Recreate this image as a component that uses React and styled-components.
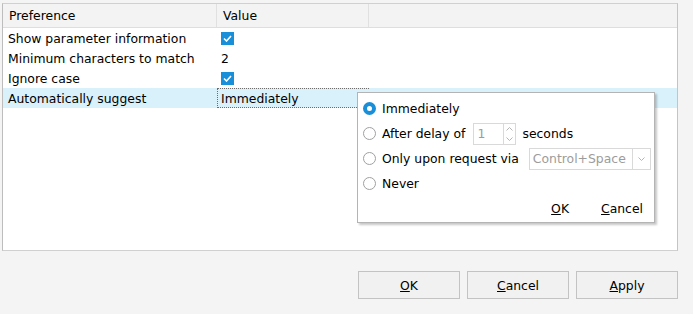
import React from 'react';
import styled, { createGlobalStyle } from 'styled-components';

const Global = createGlobalStyle`
  html, body { margin: 0; padding: 0; background: #f4f4f4; }
  body { font-family: "DejaVu Sans", Verdana, sans-serif; font-size: 12.4px; color: #000; }
`;

const Window = styled.div`
  width: 693px;
  height: 314px;
  display: flex;
  flex-direction: column;
  background: #f4f4f4;
  box-sizing: border-box;
  padding: 3px 15px 0 2px;
`;

const Table = styled.div`
  position: relative;
  height: 248px;
  background: #fff;
  border: 1px solid #d0d0d0;
  border-left-color: #bdbdbd;
  border-right-color: #c4c4c4;
  box-sizing: border-box;
`;

const Header = styled.div`
  display: grid;
  grid-template-columns: 214px 152px 1fr;
  height: 23px;
  background: #f3f3f3;
  border-bottom: 1px solid #dedede;
`;

const HeadCell = styled.div`
  display: flex;
  align-items: center;
  padding-left: 6px;
  border-right: 1px solid #e0e0e0;
  &:last-child { border-right: none; }
`;

const Row = styled.div`
  display: grid;
  grid-template-columns: 214px 152px 1fr;
  height: 20px;
  background: ${p => (p.$selected ? '#d9f1fb' : '#fff')};
`;

const Cell = styled.div`
  display: flex;
  align-items: center;
  white-space: nowrap;
  padding-left: ${p => (p.$value ? '4px' : '5px')};
`;

const Editor = styled.div`
  display: flex;
  align-items: center;
  padding-left: 3px;
  border: 1px dotted #6d6d6d;
  border-right: none;
  box-sizing: border-box;
`;

const Check = styled.span`
  width: 13px;
  height: 13px;
  background: #1a8fd9;
  display: inline-flex;
  align-items: center;
  justify-content: center;
`;

const Popup = styled.div`
  position: absolute;
  left: 354px;
  top: 88px;
  width: 298px;
  height: 131px;
  background: #fff;
  border: 1px solid #b4b4b4;
  box-shadow: 2px 2px 2px rgba(0, 0, 0, 0.22);
  box-sizing: border-box;
  padding: 3px 10px 0 4px;
  display: flex;
  flex-direction: column;
  white-space: nowrap;
`;

const Option = styled.div`
  display: flex;
  align-items: center;
  height: 25px;
  gap: 6px;
`;

const Radio = styled.span`
  width: 13px;
  height: 13px;
  border-radius: 50%;
  box-sizing: border-box;
  flex: none;
  border: ${p => (p.$on ? '4px solid #1a8fd9' : '1px solid #a0a0a0')};
  background: #fff;
  margin-left: 1px;
`;

const Field = styled.span`
  display: inline-flex;
  align-items: stretch;
  height: 22px;
  border: 1px solid #d9d9d9;
  box-sizing: border-box;
  color: #9c9c9c;
  margin-left: ${p => p.$shift || 0}px;
`;

const FieldText = styled.span`
  display: flex;
  align-items: center;
  padding: 0 3px;
  width: ${p => p.$w}px;
  box-sizing: border-box;
`;

const Spin = styled.span`
  width: 11px;
  display: flex;
  flex-direction: column;
  justify-content: center;
  border-left: 1px solid #d9d9d9;
`;

const SpinPart = styled.span`
  flex: 1;
  display: flex;
  align-items: center;
  justify-content: center;
`;

const DropArrow = styled.span`
  width: 17px;
  border-left: 1px solid #d9d9d9;
  display: flex;
  align-items: center;
  justify-content: center;
`;

const PopupActions = styled.div`
  display: flex;
  justify-content: flex-end;
  gap: 32px;
  margin-top: 5px;
  padding-right: 1px;
`;

const Link = styled.span`
  & u { text-decoration: underline; }
`;

const Footer = styled.div`
  display: flex;
  justify-content: flex-end;
  gap: 7px;
  margin-top: 20px;
`;

const Button = styled.button`
  width: 102px;
  height: 28px;
  background: #f1f1f1;
  border: 1px solid #c3c3c3;
  font-family: "DejaVu Sans", Verdana, sans-serif;
  font-size: 12.4px;
  color: #000;
  padding: 0;
`;

const Tick = () => (
  <svg width="9" height="7" viewBox="0 0 9 7">
    <path d="M1 3.5 L3.5 6 L8 1" stroke="#fff" strokeWidth="1.6" fill="none" />
  </svg>
);

const Chevron = ({ up }) => (
  <svg width="7" height="4" viewBox="0 0 7 4">
    <path d={up ? 'M0.5 3.5 L3.5 0.5 L6.5 3.5' : 'M0.5 0.5 L3.5 3.5 L6.5 0.5'} stroke="#b5b5b5" fill="none" />
  </svg>
);

const rows = [
  ['Show parameter information', <Check><Tick /></Check>],
  ['Minimum characters to match', '2'],
  ['Ignore case', <Check><Tick /></Check>],
];

export default function App() {
  return (
    <Window>
      <Global />
      <Table>
        <Header>
          <HeadCell>Preference</HeadCell>
          <HeadCell>Value</HeadCell>
          <HeadCell />
        </Header>
        {rows.map(([label, value]) => (
          <Row key={label}>
            <Cell>{label}</Cell>
            <Cell $value>{value}</Cell>
          </Row>
        ))}
        <Row $selected>
          <Cell>Automatically suggest</Cell>
          <Editor>Immediately</Editor>
        </Row>
        <Popup>
          <Option><Radio $on />Immediately</Option>
          <Option>
            <Radio />After delay of
            <Field $shift={2}>
              <FieldText $w={29}>1</FieldText>
              <Spin>
                <SpinPart><Chevron up /></SpinPart>
                <SpinPart><Chevron /></SpinPart>
              </Spin>
            </Field>
            seconds
          </Option>
          <Option>
            <Radio />Only upon request via
            <Field $shift={4}>
              <FieldText $w={102}>Control+Space</FieldText>
              <DropArrow><Chevron /></DropArrow>
            </Field>
          </Option>
          <Option><Radio />Never</Option>
          <PopupActions>
            <Link><u>O</u>K</Link>
            <Link><u>C</u>ancel</Link>
          </PopupActions>
        </Popup>
      </Table>
      <Footer>
        <Button><u>O</u>K</Button>
        <Button><u>C</u>ancel</Button>
        <Button><u>A</u>pply</Button>
      </Footer>
    </Window>
  );
}
